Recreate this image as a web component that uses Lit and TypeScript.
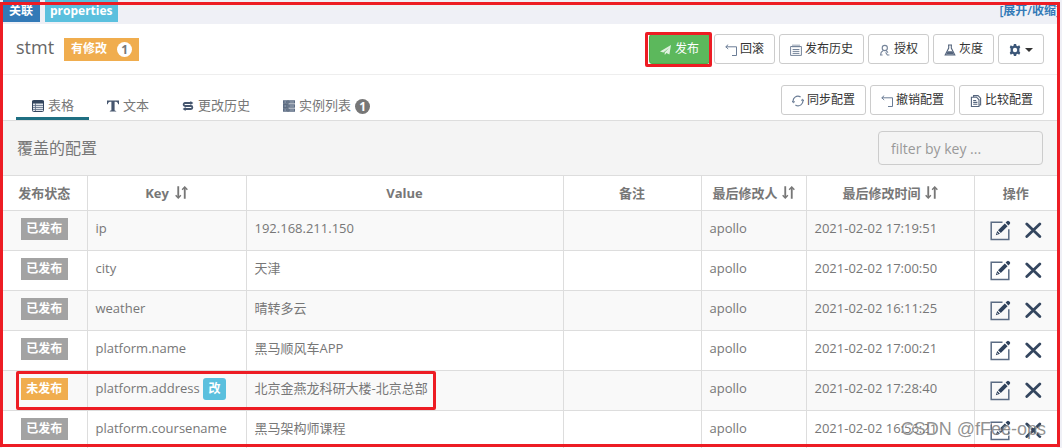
import { LitElement, html, css, svg, nothing } from "lit";
import { customElement, property, state } from "lit/decorators.js";

interface Item {
  key: string;
  value: string;
  time: string;
  published: boolean;
}

const ITEMS: Item[] = [
  { key: "ip", value: "192.168.211.150", time: "2021-02-02 17:19:51", published: true },
  { key: "city", value: "天津", time: "2021-02-02 17:00:50", published: true },
  { key: "weather", value: "晴转多云", time: "2021-02-02 16:11:25", published: true },
  { key: "platform.name", value: "黑马顺风车APP", time: "2021-02-02 17:00:21", published: true },
  { key: "platform.address", value: "北京金燕龙科研大楼-北京总部", time: "2021-02-02 17:28:40", published: false },
  { key: "platform.coursename", value: "黑马架构师课程", time: "2021-02-02 16:56:21", published: true },
];

const ICONS: Record<string, unknown> = {
  plane: svg`<path d="M0 7.5 11 1 9.4 10.4 6.4 9 4.8 11 4.6 8.6 9 4 3.4 8.4Z" fill="#fff" opacity=".8"/>`,
  back: svg`<path d="M3.2.6.8 2.8 3.2 5M.8 2.8H11.5V11.5H7" fill="none" stroke="#6b7d96" stroke-width="1"/>`,
  calendar: svg`<path d="M.6 2.5H11.4V11.4H.6ZM3 .5V3.4M5 .5V3.4M7 .5V3.4M9 .5V3.4M2.6 5.5H9.4M2.6 7.4H9.4M2.6 9.4H9.4" fill="none" stroke="#75849a" stroke-width="1"/>`,
  user: svg`<circle cx="5.8" cy="4" r="2.6" fill="none" stroke="#75849a" stroke-width="1.1"/><path d="M4.4 6.4 2.2 8.4 1.6 11H3.6M7 6.4 9 8.6M6.6 8.4 8.4 11H10.4" fill="none" stroke="#75849a" stroke-width="1.1"/>`,
  flask: svg`<path d="M4 1H8M4.7 1V4L1.2 10.9H10.8L7.3 4V1" fill="none" stroke="#55657d" stroke-width="1.1"/><path d="M3.6 7.2H8.4L9.7 9.9H2.3Z" fill="#55657d"/>`,
  refresh: svg`<path d="M1.4 7.4A4.7 4.7 0 0 1 8.6 2.1M10.6 4.6A4.7 4.7 0 0 1 3.4 9.9" fill="none" stroke="#6b7d96" stroke-width="1.2"/><path d="M.2 6 1.4 7.8 3 6.4M9 5.6 10.6 4.2 11.8 6" fill="none" stroke="#6b7d96"/>`,
  compare: svg`<path d="M3.6 2V.6H8L10.6 3.2V10H9.4M1.4 2.2H6.6L9 4.8V11.5H1.4Z" fill="none" stroke="#55657d" stroke-width="1.1"/><path d="M3.2 5.5H6.2M3.2 7.4H7.4M3.2 9.3H7.4" stroke="#55657d" stroke-width="1.1"/>`,
  gear: svg`<path d="M4.9 0H7.1L7.5 1.7 8.6 2.2 10.2 1.3 11.3 3.2 10.4 4.6V7.4L11.3 8.8 10.2 10.7 8.6 9.8 7.5 10.3 7.1 12H4.9L4.5 10.3 3.4 9.8 1.8 10.7.7 8.8 1.6 7.4V4.6L.7 3.2 1.8 1.3 3.4 2.2 4.5 1.7Z" fill="#3b5678"/><circle cx="6" cy="6" r="2.2" fill="#fff"/>`,
  table: svg`<rect x=".5" y=".5" width="11" height="11" rx="1" fill="#dfe4ea" stroke="#34465f"/><path d="M.5 1H11.5V3H.5Z" fill="#34465f" stroke="#34465f"/><path d="M1 5.5H11M1 7.5H11M1 9.5H11M3.5 3V11" stroke="#5f6f86" stroke-width=".8"/>`,
  text: svg`<path d="M0 .5H12V4.2H11.2C10.8 2.4 10 1.8 7.6 1.8V9.8C7.6 10.7 8 10.9 9.2 11V11.6H2.8V11C4 10.9 4.4 10.7 4.4 9.8V1.8C2 1.8 1.2 2.4.8 4.2H0Z" fill="#46566e"/>`,
  loop: svg`<path d="M9 3H3C1.2 3 1.2 6 3 6H9C10.8 6 10.8 9 9 9H3" fill="none" stroke="#46566e" stroke-width="1.8"/><path d="M8.4 1 11.4 3 8.4 5ZM3.6 7 .6 9 3.6 11Z" fill="#46566e"/>`,
  grid: svg`<path d="M0 .3H4.6V3.6H0ZM0 4.3H4.6V7.7H0ZM0 8.4H4.6V11.7H0ZM5.4.3H12V3.6H5.4ZM5.4 4.3H12V7.7H5.4ZM5.4 8.4H12V11.7H5.4Z" fill="#5c6c84"/><path d="M5 0V12M0 4H4.6M0 8H4.6" stroke="#34465f" stroke-width="1"/><path d="M1.4 2H3.2M1.4 6H3.2M1.4 10H3.2M6.6 2H11M6.6 6H11M6.6 10H11" stroke="#a3adba"/>`,
  sort: svg`<path d="M3 .3V10.5M9 11.7V1.5" stroke="#777" stroke-width="1.7"/><path d="M.6 8.6 3 11.1 5.4 8.6M6.6 3.4 9 .9 11.4 3.4" fill="none" stroke="#777" stroke-width="1.3"/>`,
};

const icon = (name: string, cls = "icon") =>
  html`<svg class=${cls} viewBox="0 0 12 12" aria-hidden="true">${ICONS[name]}</svg>`;

@customElement("config-row-actions")
class ConfigRowActions extends LitElement {
  @property() label = "";

  static styles = css`
    :host { display: flex; gap: 14px; align-items: center; padding: 1px 7px 0; }
    button { display: block; padding: 0; border: 0; background: none; cursor: pointer; }
    svg { display: block; }
  `;

  render() {
    return html`
      <button aria-label="修改 ${this.label}">
        <svg width="21" height="21" viewBox="0 0 21 21">
          <path d="M12.5 2.2H1.2V19.4H18.8V9.2" fill="none" stroke="#5b6c84" stroke-width="1.5"/>
          <path d="M8 10.2 14.8 3.4 17.6 6.2 10.8 13ZM15.6 2.6 17 1.2Q18 .4 19 1.2L19.9 2.1Q20.6 3 19.8 4L18.4 5.4ZM7.2 11 10 13.8 5.8 15.2Z" fill="#2f425d"/>
          <path d="M6.9 13 8.1 14.2" stroke="#fff" stroke-width=".7"/>
        </svg>
      </button>
      <button aria-label="删除 ${this.label}">
        <svg width="17" height="17" viewBox="0 0 17 17">
          <path d="M1.8 2 14.8 14.6M14.8 2 1.8 14.6" fill="none" stroke="#34465f" stroke-width="2.8" stroke-linecap="round"/>
        </svg>
      </button>
    `;
  }
}

@customElement("app-root")
class AppRoot extends LitElement {
  @state() private tab = 0;

  static styles = css`
    :host {
      display: block;
      position: relative;
      height: 100vh;
      overflow: hidden;
      background: #eff0f6;
      color: #777;
      font: 13px/18px "Open Sans", "Noto Sans CJK SC", sans-serif;
    }
    * { box-sizing: border-box; }
    button, input { font-family: inherit; }
    .strip { display: flex; gap: 5px; height: 24px; padding: 0 2px 2px 3px; font-size: 12px; font-weight: 700; line-height: 22px; }
    .tag { padding: 0 5px; color: #fff; }
    .tag-link { width: 37px; padding: 0 6px; background: #337ab7; }
    .tag-props { background: #5bc0de; }
    .toggle { margin-left: auto; color: #337ab7; text-decoration: none; font-weight: 600; }
    .panel { margin: 0 5px 0 2px; background: #fff; }
    .head { display: flex; align-items: center; height: 51px; padding: 0 13px 0 14px; border-bottom: 1px solid #eee; }
    .title { margin: 0 10px 4px 0; font-size: 18px; font-weight: 400; line-height: 24px; color: #666; }
    .modified { display: flex; align-items: center; gap: 10px; height: 23px; padding: 0 7px; background: #f0ad4e; color: #fff; font-size: 12px; font-weight: 700; }
    .count { display: inline-block; width: 15px; height: 15px; border-radius: 8px; background: #777; color: #fff; font-size: 12px; font-weight: 700; line-height: 15px; text-align: center; }
    .count-light { background: #fff; color: #777; }
    .buttons { display: flex; gap: 4px; margin-left: auto; }
    .btn { display: flex; align-items: center; gap: 3px; height: 30px; padding: 0 10px; border: 1px solid #ccc; border-radius: 3px; background: #fff; color: #333; font-size: 12px; line-height: 18px; cursor: pointer; white-space: nowrap; }
    .btn-primary { border-color: #4cae4c; background: #5cb85c; color: #fff; }
    .icon { flex: none; display: block; width: 12px; height: 12px; margin-top: 2px; }
    .caret { margin: 1px 0 0 1px; border: 4px solid transparent; border-top-color: #333; border-bottom: 0; }
    .marked { position: relative; }
    .marked::after { content: ""; position: absolute; inset: -2px -2px -3px -4px; border: 3px solid #ed1c24; border-radius: 2px; pointer-events: none; }
    .tabs { display: flex; align-items: flex-end; height: 46px; padding: 0 13px 0 14px; border-bottom: 1px solid #ddd; }
    .tablist { display: flex; gap: 2px; }
    .tab { display: flex; align-items: center; gap: 4px; height: 30px; padding: 2px 15px 0 16px; border: 0; border-bottom: 3px solid transparent; background: none; color: #777; font-size: 13px; line-height: 18px; cursor: pointer; }
    .tab .count { margin-top: 3px; }
    .tab[aria-selected="true"] { border-bottom-color: #1f6f82; }
    .tabs .buttons { align-self: center; padding-top: 4px; }
    .filter { display: flex; align-items: center; justify-content: space-between; height: 54px; padding: 0 14px 0 15px; background: #f4f4f4; }
    .caption { margin: 0; font-size: 16px; font-weight: 400; line-height: 24px; }
    .search { width: 165px; height: 34px; padding: 0 12px; border: 1px solid #ccc; border-radius: 4px; background: transparent; color: #555; font-size: 14px; }
    .search::placeholder { color: #999; opacity: 1; }
    table { width: 100%; border-collapse: collapse; table-layout: fixed; }
    th, td { border: 1px solid #ddd; text-align: left; vertical-align: top; }
    th:first-child, td:first-child { border-left: 0; }
    th:last-child, td:last-child { border-right: 0; }
    th { height: 35px; padding: 0; text-align: center; vertical-align: middle; font-weight: 700; white-space: nowrap; }
    td { height: 40px; padding: 8px; white-space: nowrap; }
    tbody tr:nth-child(odd) { background: #f9f9f9; }
    .c-status { width: 85px; }
    .c-key { width: 159px; }
    .c-note { width: 138px; }
    .c-user { width: 105px; }
    .c-time { width: 168px; }
    .c-ops { width: 83px; }
    .sort { display: inline-block; width: 13px; height: 13px; margin-left: 4px; vertical-align: -1px; }
    .sort-key { margin-left: 6px; }
    .state { display: block; width: 47px; margin: 0 auto; background: #a3a3a3; color: #fff; font-size: 12px; font-weight: 700; line-height: 22px; text-align: center; }
    .state-cell { padding: 7px 0; }
    .state-pending { background: #f0ad4e; }
    .changed { display: inline-block; width: 23px; margin: -2px 0; border-radius: 3px; background: #5bc0de; color: #fff; font-size: 12px; font-weight: 700; line-height: 22px; text-align: center; }
    .frame { position: absolute; inset: 2px 2px 1px 0; border: 3px solid #ed1c24; pointer-events: none; }
    .row-frame { position: absolute; left: 16px; top: 371px; width: 420px; height: 39px; border: 3px solid #ed1c24; border-radius: 2px; pointer-events: none; }
    .watermark { position: absolute; right: 16px; bottom: 9px; color: rgba(110, 110, 110, 0.75); font: 18px/20px "Liberation Sans", sans-serif; text-shadow: 1px 1px 0 rgba(255, 255, 255, 0.7); pointer-events: none; }
  `;

  private button(name: string, label: string) {
    return html`<button class="btn">${icon(name)}${label}</button>`;
  }

  private renderTab(index: number, name: string, label: string, count?: number) {
    return html`<button class="tab" role="tab" aria-selected=${this.tab === index} @click=${() => (this.tab = index)}>
      ${icon(name)}<span>${label}</span>${count ? html`<span class="count">${count}</span>` : nothing}
    </button>`;
  }

  render() {
    return html`
      <div class="strip">
        <span class="tag tag-link">关联</span>
        <span class="tag tag-props">properties</span>
        <a class="toggle" href="#">[展开/收缩]</a>
      </div>
      <main class="panel">
        <header class="head">
          <h1 class="title">stmt</h1>
          <span class="modified">有修改<span class="count count-light">1</span></span>
          <div class="buttons">
            <div class="marked"><button class="btn btn-primary">${icon("plane")}发布</button></div>
            ${this.button("back", "回滚")} ${this.button("calendar", "发布历史")}
            ${this.button("user", "授权")} ${this.button("flask", "灰度")}
            <button class="btn" aria-label="设置">${icon("gear")}<span class="caret"></span></button>
          </div>
        </header>
        <nav class="tabs">
          <div class="tablist" role="tablist">
            ${this.renderTab(0, "table", "表格")} ${this.renderTab(1, "text", "文本")}
            ${this.renderTab(2, "loop", "更改历史")} ${this.renderTab(3, "grid", "实例列表", 1)}
          </div>
          <div class="buttons">
            ${this.button("refresh", "同步配置")} ${this.button("back", "撤销配置")} ${this.button("compare", "比较配置")}
          </div>
        </nav>
        <div class="filter">
          <h2 class="caption">覆盖的配置</h2>
          <input class="search" type="text" placeholder="filter by key ..." aria-label="filter by key" />
        </div>
        <table>
          <thead>
            <tr>
              <th class="c-status">发布状态</th>
              <th class="c-key">Key${icon("sort", "sort sort-key")}</th>
              <th>Value</th>
              <th class="c-note">备注</th>
              <th class="c-user">最后修改人${icon("sort", "sort")}</th>
              <th class="c-time">最后修改时间${icon("sort", "sort")}</th>
              <th class="c-ops">操作</th>
            </tr>
          </thead>
          <tbody>
            ${ITEMS.map(
              (item) => html`<tr>
                <td class="state-cell">
                  <span class="state ${item.published ? "" : "state-pending"}">${item.published ? "已发布" : "未发布"}</span>
                </td>
                <td>${item.key}${item.published ? nothing : html` <span class="changed">改</span>`}</td>
                <td>${item.value}</td>
                <td></td>
                <td>apollo</td>
                <td>${item.time}</td>
                <td><config-row-actions .label=${item.key}></config-row-actions></td>
              </tr>`
            )}
          </tbody>
        </table>
      </main>
      <div class="row-frame"></div>
      <div class="watermark">CSDN @fFee-ops</div>
      <div class="frame"></div>
    `;
  }
}
